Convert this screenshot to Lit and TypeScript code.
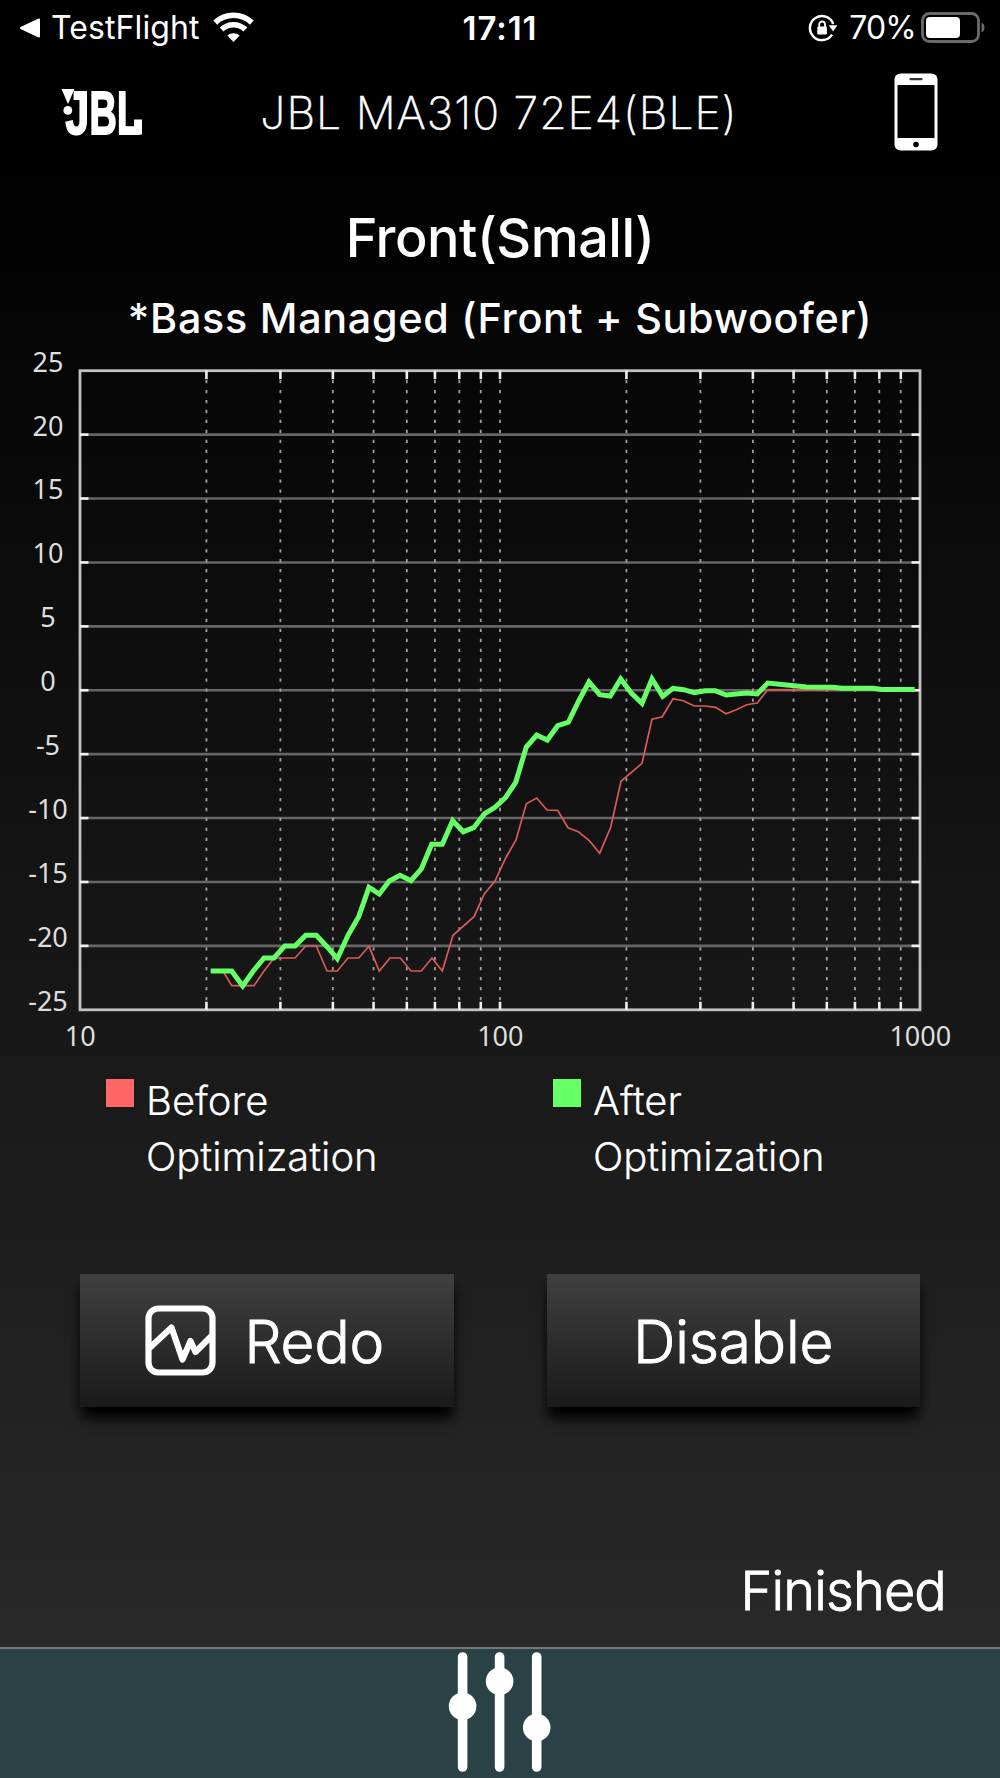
import { LitElement, html, css, svg } from "lit";
import { customElement } from "lit/decorators.js";

const LEFT = 80;
const RIGHT = 920;
const TOP = 370.7;
const BOTTOM = 1009.8;

const xOf = (hz: number) => LEFT + ((RIGHT - LEFT) / 2) * Math.log10(hz / 10);
const yOf = (db: number) => TOP + ((25 - db) / 50) * (BOTTOM - TOP);

const LEVELS = [25, 20, 15, 10, 5, 0, -5, -10, -15, -20, -25];
const FREQS = [20, 30, 40, 50, 60, 70, 80, 90, 100, 200, 300, 400, 500, 600, 700, 800, 900];

const AFTER =
  "210.7,971 231.7,971 242.7,986 253.3,971 264,958 274,958 284.7,946 295,946 305.7,935.3 316.3,935.3 327,946.7 337.3,958.7 348,935.3 358.7,916.7 369,887.3 379.3,894 389.3,881 400,875.3 411,880.7 421.3,869 431.7,844.3 442.3,844.3 452.7,820.7 463.3,831.7 473.7,827.7 484.3,814 495,807.3 505.7,797.3 515.7,782.3 526.3,747 536.7,735 547.3,740 557.7,725.7 568.3,722.3 578.7,701 589,682 599.7,694.7 610.3,696 620.7,679 631.3,693 642,703.3 652,679 662.7,696.3 673,688.3 683.7,689.7 694.3,692.7 705,690.7 715.3,690.7 726,695 746.7,693 757.3,694 767.7,683 806.7,687 833.3,687.3 841.7,688.3 873.3,688.3 881.7,689.5 914.7,689.5";
const BEFORE =
  "210.7,971 223,971 231.7,985.7 254,985.7 264,971 274,958 295,958 305.7,946 316.3,946 327,971 337.3,971 348,958 358.7,958 369,946.3 379.3,971 390,958 400.3,958 411,971 421.3,971 432,958 442.3,971 453,935.3 474,916.7 484.3,894 495,881 505.7,858 516,840 526.3,803.7 536.7,798 547,810 557.7,810.3 568,827.7 578.7,832 589,840.3 599.7,853.3 610.7,827.3 621,781.3 642,763.3 652,719.3 662.3,716.7 673,698.7 683.3,700.7 694.3,706 705,706 715.7,707.3 726,713.7 736.3,709.7 746.7,704.7 757.3,703 767.7,689.7 914.7,690";

@customElement("response-chart")
export class ResponseChart extends LitElement {
  static styles = css`
    :host { display: block; height: 719px; }
    svg { display: block; }
    .label { font: 400 27px "Noto Sans", sans-serif; fill: #dedede; text-anchor: middle; }
    .level { stroke: #666; stroke-width: 2.6; }
    .freq { stroke: #a0a0a0; stroke-width: 1.8; stroke-dasharray: 3.3 6.65; }
    .tick { stroke: #f0f0f0; stroke-width: 2.6; }
    .frame { fill: none; stroke: #c2c0c0; stroke-width: 2.8; }
    .before { fill: none; stroke: #d95b58; stroke-width: 1.7; }
    .after { fill: none; stroke: #66ff66; stroke-width: 5; stroke-linejoin: miter; }
  `;

  render() {
    return html`<svg width="1000" height="719" viewBox="0 335 1000 719">
      ${LEVELS.slice(1, -1).map(
        (v) => svg`<line class="level" x1=${LEFT} x2=${RIGHT} y1=${yOf(v)} y2=${yOf(v)} />`
      )}
      ${FREQS.map(
        (f) => svg`<line class="freq" x1=${xOf(f)} x2=${xOf(f)} y1="380" y2="1003" />`
      )}
      <rect class="frame" x=${LEFT} y=${TOP} width=${RIGHT - LEFT} height=${BOTTOM - TOP} />
      ${LEVELS.slice(1, -1).map(
        (v) => svg`
          <line class="tick" x1=${LEFT} x2=${LEFT + 8.5} y1=${yOf(v)} y2=${yOf(v)} />
          <line class="tick" x1=${RIGHT - 8.5} x2=${RIGHT} y1=${yOf(v)} y2=${yOf(v)} />`
      )}
      ${FREQS.map(
        (f) => svg`
          <line class="tick" x1=${xOf(f)} x2=${xOf(f)} y1=${TOP} y2=${TOP + 8.5} />
          <line class="tick" x1=${xOf(f)} x2=${xOf(f)} y1=${BOTTOM - 8} y2=${BOTTOM} />`
      )}
      <polyline class="before" points=${BEFORE} />
      <polyline class="after" points=${AFTER} />
      ${LEVELS.map(
        (v) => svg`<text class="label" x="48" y=${yOf(v) + 0.9}>${v}</text>`
      )}
      ${[10, 100, 1000].map(
        (f) => svg`<text class="label" x=${xOf(f) + 0.3} y="1046.3">${f}</text>`
      )}
    </svg>`;
  }
}

@customElement("app-root")
export class AppRoot extends LitElement {
  static styles = css`
    :host { display: block; }
    * { box-sizing: border-box; }
    svg { display: block; flex: none; }
    .screen {
      width: 1000px; height: 1778px; display: flex; flex-direction: column; overflow: hidden;
      color: #fff; font-family: Inter, "Liberation Sans", sans-serif; white-space: nowrap;
      background: linear-gradient(#000 130px, #292929 1647px);
    }
    .status {
      height: 56px; flex: none; display: grid; grid-template-columns: 1fr auto 1fr;
      padding: 0 15px; align-items: center; font-size: 32px; line-height: 56px;
    }
    .side { display: flex; align-items: center; padding-left: 4px; }
    .side.end { justify-content: flex-end; padding-left: 0; }
    .back { margin-left: 10px; letter-spacing: 0.1px; }
    .wifi { margin-left: 13px; margin-top: -2px; }
    .clock { font-weight: 600; font-size: 33px; letter-spacing: 0.9px; }
    .percent { margin: 0 4px 0 11px; letter-spacing: -0.8px; }
    .header {
      height: 112px; flex: none; display: grid; grid-template-columns: 1fr auto 1fr;
      align-items: center; padding: 0 62px 0 60px;
    }
    .device {
      font-size: 44.5px; font-weight: 200; line-height: 110px; letter-spacing: 1px; padding-top: 1px;
      -webkit-text-stroke: 0.5px #fff;
    }
    .phone { justify-self: end; }
    .heading { margin: 34px 0 0; height: 70px; text-align: center; font-size: 54px; font-weight: 500; line-height: 71px; letter-spacing: -0.5px; }
    .sub { margin: 16px 0 0; height: 47px; text-align: center; font-size: 41.3px; font-weight: 500; line-height: 60px; letter-spacing: 0.72px; }
    .legend { display: grid; grid-template-columns: 447px 1fr; padding-left: 106px; height: 112px; margin-top: 18px; }
    .item { display: flex; gap: 12px; font-size: 40px; font-weight: 300; line-height: 56px; letter-spacing: -0.05px; -webkit-text-stroke: 0.2px #fff; }
    .item .caption { padding-top: 1px; }
    .swatch { width: 28px; height: 28px; margin-top: 7px; flex: none; }
    .red { background: #ff6666; }
    .green { background: #66ff66; }
    .actions { display: flex; justify-content: space-between; padding: 0 80px; margin-top: 90px; }
    .btn {
      width: 373.5px; height: 133px; border: 0; padding: 0; display: flex; align-items: center; justify-content: center;
      background: linear-gradient(#404040, #1a1a1a); box-shadow: 0 12px 12px -1px #000;
      color: #fff; font: 300 58.5px/133px Inter, sans-serif; letter-spacing: -0.1px; gap: 28px;
      -webkit-text-stroke: 1px #fff;
    }
    .btn.redo { padding-right: 4px; }
    .btn span { padding-top: 1px; }
    .finished {
      margin-top: 144px; height: 79px; padding-right: 54px; text-align: right; font-size: 54px; font-weight: 300;
      line-height: 79px; letter-spacing: -0.85px; -webkit-text-stroke: 0.9px #fff;
    }
    .bar {
      height: 131px; margin-top: auto; flex: none; border-top: 2px solid #777; background: #2a4145;
      display: flex; justify-content: center; padding-top: 3px;
    }
    .wordmark { font: 700 61px "Liberation Sans", sans-serif; fill: #fff; stroke: #fff; stroke-width: 2; }
  `;

  render() {
    return html`<div class="screen">
      <div class="status">
        <div class="side">
          <svg width="22" height="22" viewBox="0 0 22 22"><path d="M2 11 20 2.5v17z" fill="#fff" stroke="#fff" stroke-width="2" stroke-linejoin="round" /></svg>
          <span class="back">TestFlight</span>
          <svg class="wifi" width="41" height="31" viewBox="0 0 41 31">
            <g fill="none" stroke="#fff" stroke-width="5.6">
              <path d="M2.2 10.6a26.5 26.5 0 0 1 36.6 0" />
              <path d="M8.6 17.6a17.2 17.2 0 0 1 23.8 0" />
            </g>
            <path d="M20.5 30 14.3 23.6a9.4 9.4 0 0 1 12.4 0z" fill="#fff" />
          </svg>
        </div>
        <span class="clock">17:11</span>
        <div class="side end">
          <svg width="30" height="28" viewBox="0 0 30 28">
            <path d="M24 20.6A12 12 0 1 1 25.2 10" fill="none" stroke="#fff" stroke-width="2.4" />
            <path d="M20.8 11.2h8.6l-4.3 6.2z" fill="#fff" />
            <rect x="9.3" y="12.6" width="9.6" height="7.8" rx="1" fill="#fff" />
            <path d="M11.2 13v-2.6a2.9 2.9 0 0 1 5.8 0V13" fill="none" stroke="#fff" stroke-width="1.8" />
          </svg>
          <span class="percent">70%</span>
          <svg width="65" height="32" viewBox="0 0 65 32">
            <rect x="2.5" y="1.5" width="56" height="28" rx="7" fill="none" stroke="#6a6a6a" stroke-width="2.8" />
            <rect x="6" y="5" width="34" height="21" rx="4" fill="#fff" />
            <path d="M61.5 10.5q3 1.5 3 5t-3 5z" fill="#6a6a6a" />
          </svg>
        </div>
      </div>

      <header class="header">
        <svg width="104" height="90" viewBox="60 67 104 90">
          <path d="M61.5 89h13l-6.5 15z" fill="#fff" />
          <circle cx="67.8" cy="110.4" r="4.4" fill="#fff" />
          <g transform="translate(65.4 133.6) scale(.7 1)">
            <text class="wordmark" x="0" y="0">J</text>
          </g>
          <g transform="translate(89.4 133.6) scale(.62 1)">
            <text class="wordmark" x="0 44.5" y="0">BL</text>
          </g>
          <rect x="134" y="119.5" width="8" height="15" fill="#fff" />
        </svg>
        <span class="device">JBL MA310 72E4(BLE)</span>
        <svg class="phone" width="44" height="78" viewBox="0 0 44 78">
          <rect x=".5" y=".5" width="43" height="77" rx="6" fill="#fff" />
          <rect x="3.5" y="12" width="37" height="53" fill="#000" />
          <rect x="15.5" y="5" width="13" height="2.2" rx="1" fill="#333" />
          <circle cx="22" cy="71.5" r="2.8" fill="#000" />
        </svg>
      </header>

      <h1 class="heading">Front(Small)</h1>
      <h2 class="sub">*Bass Managed (Front + Subwoofer)</h2>
      <response-chart></response-chart>

      <div class="legend">
        <div class="item"><span class="swatch red"></span><span class="caption">Before<br />Optimization</span></div>
        <div class="item"><span class="swatch green"></span><span class="caption">After<br />Optimization</span></div>
      </div>

      <div class="actions">
        <button class="btn redo">
          <svg width="71" height="71" viewBox="0 0 71 71" fill="none" stroke="#fff" stroke-width="6.2">
            <rect x="3.5" y="3.5" width="64" height="64" rx="10" />
            <path d="M4.5 43 26.5 22.5 37.5 54.5 45.5 36 50.5 47 67 30.5" stroke-linejoin="round" />
          </svg>
          <span>Redo</span>
        </button>
        <button class="btn"><span>Disable</span></button>
      </div>

      <div class="finished">Finished</div>

      <nav class="bar">
        <svg width="104" height="122" viewBox="448 1652 104 122" stroke="#fff" stroke-width="9.6" stroke-linecap="round" fill="#fff">
          <path d="M462.6 1657V1767M499.6 1657V1767M536.7 1657V1767" />
          <g stroke="none">
            <circle cx="462.6" cy="1706.3" r="13.8" />
            <circle cx="499.6" cy="1681.3" r="13.8" />
            <circle cx="536.7" cy="1727.6" r="13.8" />
          </g>
        </svg>
      </nav>
    </div>`;
  }
}
